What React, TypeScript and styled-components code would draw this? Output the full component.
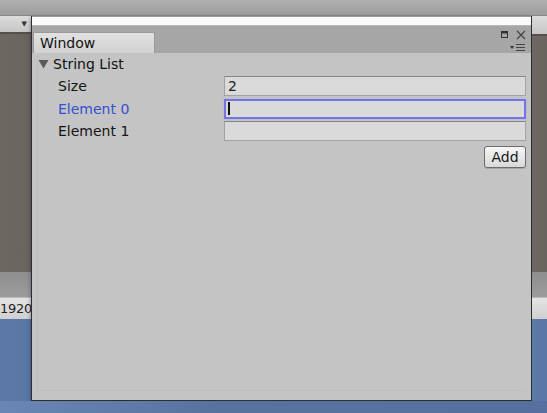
import React from "react";
import styled, { createGlobalStyle } from "styled-components";

const Global = createGlobalStyle`
  html, body { margin: 0; padding: 0; background: #5c79a8; }
  body { font-family: "DejaVu Sans", Verdana, sans-serif; }
  #root { width: 547px; height: 413px; overflow: hidden; }
`;

const Page = styled.div`
  width: 547px;
  height: 413px;
  display: flex;
  flex-direction: column;
  overflow: hidden;
  background: #5d7aa9;
`;

const TopBar = styled.div`
  height: 15px;
  flex: none;
  background: linear-gradient(#b0b0b0, #9d9d9d);
  border-bottom: 1px solid #8a8a8a;
`;

const Middle = styled.div`
  height: 385px;
  flex: none;
  display: flex;
`;

const Bottom = styled.div`
  flex: 1;
  background: linear-gradient(90deg, #6a86b5, #5872a0 40%, #55709f);
`;

const Side = styled.div<{ $w: number }>`
  width: ${(p) => p.$w}px;
  flex: none;
  display: flex;
  flex-direction: column;
  overflow: hidden;
`;

const SideToolbar = styled.div<{ $h: number }>`
  height: ${(p) => p.$h}px;
  flex: none;
  background: linear-gradient(#dcdcdc, #c6c6c6);
  border-bottom: 2px solid #55504c;
  display: flex;
  align-items: center;
  justify-content: flex-end;
  padding-right: 4px;
  font-size: 7px;
  color: #333;
`;

const Scene = styled.div`
  flex: 1;
  background: linear-gradient(90deg, #6e6863, #6a645f);
`;

const SceneGray = styled.div`
  height: 25px;
  flex: none;
  background: linear-gradient(#8e8e8e, #9c9c9c);
`;

const InfoStrip = styled.div`
  height: 21px;
  flex: none;
  background: linear-gradient(#e4e4e4, #d0d0d0);
  border-top: 1px solid #b8b8b8;
  font-size: 13px;
  letter-spacing: -0.3px;
  line-height: 21px;
  color: #222;
  white-space: nowrap;
  overflow: hidden;
`;

const Desk = styled.div`
  height: 82px;
  flex: none;
  background: linear-gradient(90deg, #5b78a7, #5a76a5);
`;

const Window = styled.div`
  width: 499px;
  flex: none;
  display: flex;
  flex-direction: column;
  border-left: 1px solid #2e2e2e;
  border-right: 1px solid #2e2e2e;
  border-bottom: 1px solid #2e2e2e;
  box-shadow: 0 2px 4px rgba(20, 30, 60, 0.5);
  background: #c4c4c4;
`;

const WhiteStrip = styled.div`
  height: 8px;
  flex: none;
  background: #fcfcfc;
  border-top: 1px solid #9a9a9a;
`;

const TabBar = styled.div`
  height: 27px;
  flex: none;
  background: #a6a6a6;
  border-top: 1px solid #b8b8b8;
  display: flex;
  align-items: flex-end;
  padding-left: 1px;
`;

const Tab = styled.div`
  width: 114px;
  height: 20px;
  background: linear-gradient(#e2e2e2, #d2d2d2);
  border: 1px solid #9a9a9a;
  border-bottom: none;
  border-radius: 2px 2px 0 0;
  font-size: 14px;
  line-height: 21px;
  padding-left: 6px;
  color: #111;
`;

const TabIcons = styled.div`
  margin-left: auto;
  align-self: stretch;
  display: flex;
  flex-direction: column;
  align-items: flex-end;
  padding: 3px 5px 0 0;
  gap: 2px;
`;

const IconRow = styled.div`
  display: flex;
  align-items: center;
  gap: 8px;
  height: 11px;
`;

const Content = styled.div`
  flex: 1;
  display: flex;
  flex-direction: column;
  padding: 3px 5px 9px 6px;
  background: #c4c4c4;
`;

const Inner = styled.div`
  flex: 1;
  display: flex;
  flex-direction: column;
  border-left: 1px solid #bdbdbd;
  border-bottom: 1px solid #bdbdbd;
  margin-left: -1px;
`;

const Header = styled.div`
  height: 16px;
  display: flex;
  align-items: center;
  gap: 4px;
  font-size: 14px;
  color: #111;
  margin-bottom: 4px;
`;

const Row = styled.div`
  display: grid;
  grid-template-columns: 166px 1fr;
  align-items: center;
  height: 20px;
  margin-bottom: 2.5px;
  padding-left: 20px;
`;

const Label = styled.div<{ $focus?: boolean }>`
  font-size: 14px;
  color: ${(p) => (p.$focus ? "#3450d4" : "#151515")};
`;

const Field = styled.div<{ $focus?: boolean }>`
  height: 20px;
  box-sizing: border-box;
  background: #dadada;
  border: ${(p) => (p.$focus ? "2px solid #7474e6" : "1px solid #a2a2a2")};
  border-top-color: ${(p) => (p.$focus ? "#7474e6" : "#858585")};
  box-shadow: ${(p) => (p.$focus ? "0 0 1px #9a9af0" : "none")};
  font-size: 14px;
  line-height: 18px;
  padding-left: ${(p) => (p.$focus ? "2px" : "3px")};
  color: #222;
  display: flex;
  align-items: center;
`;

const Caret = styled.span`
  width: 2px;
  height: 13px;
  background: #111;
`;

const ButtonRow = styled.div`
  display: flex;
  justify-content: flex-end;
  margin-top: 2px;
`;

const Button = styled.button`
  width: 42px;
  height: 22px;
  border: 1px solid #6c6c6c;
  border-radius: 3px;
  background: linear-gradient(#f6f6f6, #d9d9d9);
  font-family: "DejaVu Sans", Verdana, sans-serif;
  font-size: 14px;
  color: #1a1a1a;
  padding: 0;
  box-shadow: 0 1px 0 rgba(0, 0, 0, 0.15);
`;

export default function App() {
  return (
    <>
      <Global />
      <Page>
        <TopBar />
        <Middle>
          <Side $w={31}>
            <SideToolbar $h={16}>▼</SideToolbar>
            <Scene />
            <SceneGray />
            <InfoStrip>1920</InfoStrip>
            <Desk />
          </Side>
          <Window>
            <WhiteStrip />
            <TabBar>
              <Tab>Window</Tab>
              <TabIcons>
                <IconRow>
                  <svg width="7" height="7" viewBox="0 0 7 7">
                    <rect x="0.5" y="0.5" width="6" height="6" fill="none" stroke="#333" />
                    <rect x="0.5" y="0.5" width="6" height="2" fill="#333" />
                  </svg>
                  <svg width="10" height="10" viewBox="0 0 10 10">
                    <path d="M1 1 L9 9 M9 1 L1 9" stroke="#444" strokeWidth="1.3" />
                  </svg>
                </IconRow>
                <IconRow>
                  <svg width="16" height="9" viewBox="0 0 16 9">
                    <path d="M0 3 L4 3 L2 6 Z" fill="#333" />
                    <path d="M6 1.5 H15 M6 4.5 H15 M6 7.5 H15" stroke="#444" strokeWidth="1.2" />
                  </svg>
                </IconRow>
              </TabIcons>
            </TabBar>
            <Content>
              <Inner>
                <Header>
                  <svg width="11" height="10" viewBox="0 0 11 10">
                    <path d="M0.5 1 L10.5 1 L5.5 9.5 Z" fill="#5a5a5a" />
                  </svg>
                  String List
                </Header>
                <Row>
                  <Label>Size</Label>
                  <Field>2</Field>
                </Row>
                <Row>
                  <Label $focus>Element 0</Label>
                  <Field $focus>
                    <Caret />
                  </Field>
                </Row>
                <Row>
                  <Label>Element 1</Label>
                  <Field />
                </Row>
                <ButtonRow>
                  <Button>Add</Button>
                </ButtonRow>
              </Inner>
            </Content>
          </Window>
          <Side $w={15}>
            <SideToolbar $h={18} />
            <Scene />
            <SceneGray />
            <InfoStrip />
            <Desk />
          </Side>
        </Middle>
        <Bottom />
      </Page>
    </>
  );
}
